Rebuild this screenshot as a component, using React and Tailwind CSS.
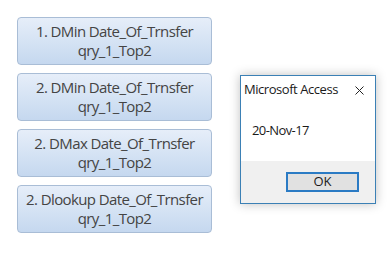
import React from "react";

const labels = [
  "1. DMin Date_Of_Trnsfer",
  "2. DMin Date_Of_Trnsfer",
  "2. DMax Date_Of_Trnsfer",
  "2. Dlookup Date_Of_Trnsfer",
];

export default function App() {
  return (
    <div className="w-[388px] h-[253px] bg-white flex items-start overflow-hidden">
      <div className="flex flex-col gap-[8px] pt-[17px] pl-[17px]">
        {labels.map((l, i) => (
          <div
            key={i}
            className="w-[195px] h-[48px] rounded-[4px] border border-[#a9bdd6] bg-gradient-to-b from-[#e6eef9] to-[#c5d8ef] flex flex-col items-center justify-center text-[#444444] text-[15px] leading-[19px] font-['Open_Sans',sans-serif] tracking-[-0.6px]"
          >
            <span>{l}</span>
            <span>qry_1_Top2</span>
          </div>
        ))}
      </div>
      <div className="ml-[28px] mt-[75px] w-[136px] h-[129px] border border-[#3b80b5] bg-white flex flex-col shadow-[0_0_10px_rgba(0,0,0,0.25)] font-['Open_Sans',sans-serif] text-[#1a1a1a]">
        <div className="flex items-center justify-between h-[28px] pl-[3px] pr-[11px]">
          <span className="text-[13px] tracking-[-0.45px]">Microsoft Access</span>
          <svg width="9" height="9" viewBox="0 0 9 9">
            <path d="M0.5 0.5 L8.5 8.5 M8.5 0.5 L0.5 8.5" stroke="#222" strokeWidth="1" />
          </svg>
        </div>
        <div className="h-[57px] pl-[11px] pt-[17px] text-[13px] leading-[18px] tracking-[-0.6px]">20-Nov-17</div>
        <div className="flex-1 bg-[#f0f0f0] flex justify-end pr-[16px] pt-[11px]">
          <div className="w-[73px] h-[20px] border-2 border-[#2b7bc4] bg-[#e1e1e1] flex items-center justify-center text-[13px]">
            OK
          </div>
        </div>
      </div>
    </div>
  );
}
